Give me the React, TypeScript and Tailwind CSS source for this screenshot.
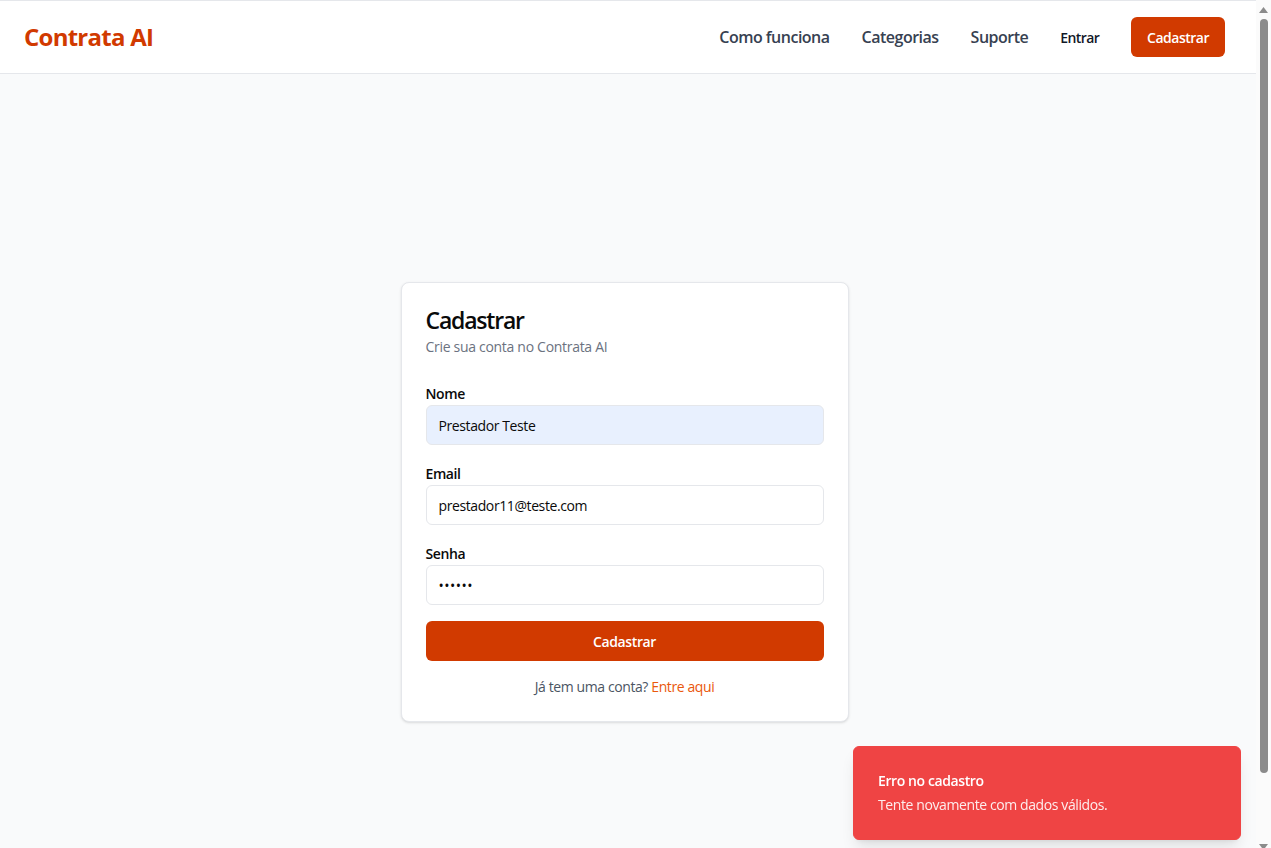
import React from "react";

const font = { fontFamily: '"Open Sans", "Noto Sans", sans-serif' };

function Scrollbar() {
  return (
    <div className="flex h-screen w-[15px] shrink-0 flex-col items-center bg-[#fbfbfb]">
      <svg width="9" height="6" viewBox="0 0 9 6" className="mt-[7px]">
        <path d="M4.5 0 L9 6 L0 6 Z" fill="#8b8b8b" />
      </svg>
      <div className="mt-[6px] h-[754px] w-[8px] rounded-full bg-[#8b8b8b]" />
      <div className="flex-1" />
      <svg width="9" height="6" viewBox="0 0 9 6" className="mb-[-2px]">
        <path d="M0 0 L9 0 L4.5 6 Z" fill="#8b8b8b" />
      </svg>
    </div>
  );
}

export default function App() {
  return (
    <div style={font} className="flex h-screen overflow-hidden bg-[#f9fafb] text-[#0a0a0a]">
      <div className="w-[1256px] shrink-0">
        <header className="flex h-[74px] items-center justify-between border-y border-[#e5e7eb] bg-white pl-6 pr-[31px]">
          <span className="text-[24px] font-bold tracking-[-0.75px] text-[#d13a00]">Contrata AI</span>
          <nav className="flex items-center">
            <a className="text-[16px] font-semibold tracking-[-0.5px] text-[#374151]">Como funciona</a>
            <a className="ml-8 text-[16px] font-semibold tracking-[-0.5px] text-[#374151]">Categorias</a>
            <a className="ml-8 text-[16px] font-semibold tracking-[-0.5px] text-[#374151]">Suporte</a>
            <a className="ml-8 text-[14px] font-semibold tracking-[-0.6px] text-[#111827]">Entrar</a>
            <button className="ml-8 flex h-10 items-center rounded-md bg-[#d13a00] px-4 text-[14px] font-semibold tracking-[-0.5px] text-white">
              Cadastrar
            </button>
          </nav>
        </header>

        <main className="flex min-h-[848px] items-center justify-center pt-2 pr-[7px]">
          <div className="w-[448px] rounded-lg border border-[#e5e7eb] bg-white shadow-sm">
            <div className="px-6 pt-6">
              <h1 className="text-[23px] leading-[26px] font-semibold tracking-[-1.2px]">Cadastrar</h1>
              <p className="mt-1 text-[14px] leading-5 tracking-[-0.3px] text-[#6b7280]">Crie sua conta no Contrata AI</p>
            </div>
            <div className="px-6 pt-[27px] pb-6 tracking-[-0.4px]">
              <div className="flex flex-col">
                <label className="mb-[1px] block h-5 text-[14px] leading-5 font-semibold">Nome</label>
                <div className="flex h-10 items-center rounded-md border border-[#e5e7eb] bg-[#e8f0fe] px-3 text-[14px]">
                  Prestador Teste
                </div>
                <label className="mt-[19px] mb-[1px] block h-5 text-[14px] leading-5 font-semibold">Email</label>
                <div className="flex h-10 items-center rounded-md border border-[#e5e7eb] bg-white px-3 text-[14px]">
                  prestador11@teste.com
                </div>
                <label className="mt-[19px] mb-[1px] block h-5 text-[14px] leading-5 font-semibold">Senha</label>
                <div className="flex h-10 items-center rounded-md border border-[#e5e7eb] bg-white px-3 text-[14px] tracking-[0.5px]">
                  ••••••
                </div>
                <button className="mt-4 flex h-10 items-center justify-center rounded-md bg-[#d13a00] text-[14px] font-semibold tracking-[-0.4px] text-white">
                  Cadastrar
                </button>
                <p className="mt-4 text-center text-[14px] leading-5 text-[#4b5563]">
                  Já tem uma conta? <a className="text-[#ea580c]">Entre aqui</a>
                </p>
              </div>
            </div>
          </div>
        </main>
      </div>
      <Scrollbar />

      <div className="fixed top-[746px] left-[853px] w-[388px] rounded-md border border-[#ef4444] bg-[#ef4444] p-6 pr-8 tracking-[-0.4px] text-white shadow-lg">
        <div className="text-[14px] leading-5 font-semibold">Erro no cadastro</div>
        <div className="mt-1 text-[14px] leading-5 opacity-90">Tente novamente com dados válidos.</div>
      </div>
    </div>
  );
}
